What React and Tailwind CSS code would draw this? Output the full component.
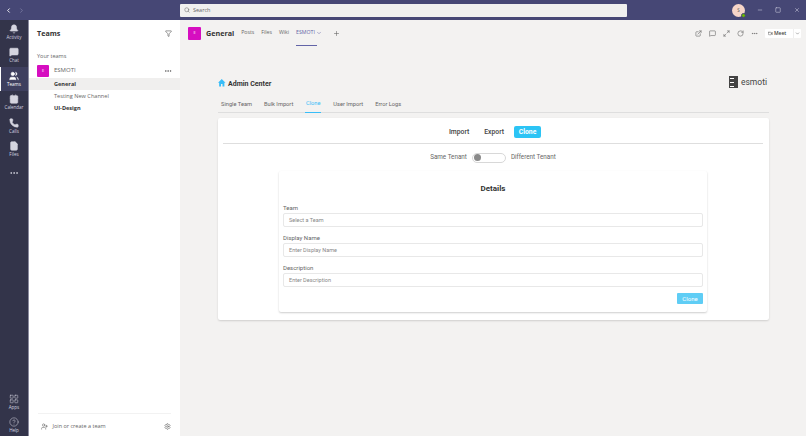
import { Bell, MessageSquareText, Users, CalendarDays, Phone, File, MoreHorizontal, LayoutGrid, HelpCircle, ChevronLeft, ChevronRight, Search, Minus, Square, X, Filter, UserPlus, Settings, ChevronDown, Plus, ExternalLink, MessageSquare, Maximize2, RotateCw, Video } from 'lucide-react'

const RAIL_TOP = [
  { label: 'Activity', icon: Bell },
  { label: 'Chat', icon: MessageSquareText },
  { label: 'Teams', icon: Users, active: true },
  { label: 'Calendar', icon: CalendarDays },
  { label: 'Calls', icon: Phone },
  { label: 'Files', icon: File },
]

const RAIL_BOTTOM = [
  { label: 'Apps', icon: LayoutGrid },
  { label: 'Help', icon: HelpCircle },
]

const ADMIN_TABS = [
  { label: 'Single Team' },
  { label: 'Bulk Import' },
  { label: 'Clone', active: true },
  { label: 'User Import' },
  { label: 'Error Logs' },
]

const FIELDS = [
  { label: 'Team', placeholder: 'Select a Team' },
  { label: 'Display Name', placeholder: 'Enter Display Name' },
  { label: 'Description', placeholder: 'Enter Description' },
]

function RailItem({ item }) {
  const Icon = item.icon
  return (
    <div className={`relative flex h-[23.5px] flex-col items-center justify-center ${item.active ? 'bg-[#3e3f5e] text-white' : 'text-[#d5d5e0]'}`}>
      {item.active && <div className="absolute left-0 top-0 h-full w-[1px] bg-white" />}
      <Icon size={10} fill="currentColor" strokeWidth={1.5} />
      <span className="mt-[1px] text-[4.5px] leading-[5px]">{item.label}</span>
    </div>
  )
}

function Channel({ name, bold, active }) {
  return (
    <div className={`flex h-[12px] items-center pl-[25px] text-[5.6px] ${active ? 'bg-[#f0efee]' : ''} ${bold ? 'font-bold text-[#333]' : 'text-[#666]'}`}>
      {name}
    </div>
  )
}

function Field({ field }) {
  return (
    <div className="mb-[5.5px]">
      <div className="mb-[1.5px] h-[9px] text-[6px] leading-[9px] text-[#666]">{field.label}</div>
      <div className="flex h-[14px] items-center rounded-[2px] border border-[#e8e8e8] bg-white pl-[5px] text-[5.5px] text-[#888]">
        {field.placeholder}
      </div>
    </div>
  )
}

export default function App() {
  return (
    <div className="flex h-[436px] w-[806px] flex-col overflow-hidden bg-[#f3f2f1] font-['Open_Sans',sans-serif]">
      {/* Title bar */}
      <div className="flex h-[20px] shrink-0 items-center bg-[#464775] text-[#d8d8e8]">
        <div className="flex w-[180px] items-center gap-[6px] pl-[5px]">
          <ChevronLeft size={7} strokeWidth={3} className="text-white" />
          <ChevronRight size={7} strokeWidth={2} className="text-[#8f90b5]" />
        </div>
        <div className="flex h-[13px] w-[447px] items-center gap-[3px] rounded-[1px] bg-[#f0f0ef] pl-[4px] text-[5.5px] text-[#666]">
          <Search size={6} />
          Search
        </div>
        <div className="ml-auto flex items-center pr-[6px]">
          <div className="relative mr-[12px] flex h-[13px] w-[13px] items-center justify-center rounded-full bg-[#f6d5c8] text-[4.5px] text-[#555]">
            S
            <div className="absolute -bottom-[1px] -right-[1px] h-[5px] w-[5px] rounded-full border border-[#464775] bg-[#6bb700]" />
          </div>
          <Minus size={6} className="mr-[12px]" />
          <Square size={6} className="mr-[13px]" />
          <X size={6} />
        </div>
      </div>

      <div className="flex min-h-0 flex-1">
        {/* App rail */}
        <div className="flex w-[29px] shrink-0 flex-col border-r border-[#8a8a9e] bg-[#33344a]">
          {RAIL_TOP.map((item) => <RailItem key={item.label} item={item} />)}
          <div className="flex h-[24px] items-center justify-center text-[#d5d5e0]"><MoreHorizontal size={10} /></div>
          <div className="mt-auto">
            {RAIL_BOTTOM.map((item) => (
              <div key={item.label} className="flex h-[23.5px] flex-col items-center justify-end pb-[3px] text-[#d5d5e0]">
                <item.icon size={10} strokeWidth={1.25} />
                <span className="mt-[1px] text-[4.5px] leading-[5px]">{item.label}</span>
              </div>
            ))}
          </div>
        </div>

        {/* Teams list */}
        <div className="flex w-[151px] shrink-0 flex-col bg-white">
          <div className="flex h-[26px] items-center justify-between px-[8px]">
            <span className="text-[7.2px] font-bold text-[#333]">Teams</span>
            <Filter size={7} className="text-[#555]" />
          </div>
          <div className="mt-[6px] pl-[8px] text-[5.5px] leading-[9px] text-[#666]">Your teams</div>
          <div className="mt-[2px] flex h-[15px] items-center px-[8px]">
            <div className="flex h-[12px] w-[12px] items-center justify-center rounded-[1px] bg-[#d60ec0] text-[4px] text-white">E</div>
            <span className="ml-[5px] text-[6px] text-[#666]">ESMOTI</span>
            <MoreHorizontal size={8} className="ml-auto text-[#555]" />
          </div>
          <Channel name="General" bold active />
          <Channel name="Testing New Channel" />
          <Channel name="UI-Design" bold />
          <div className="mx-[9px] mt-auto flex h-[23px] items-center border-t border-[#f2f2f2] pt-[2px] text-[#666]">
            <UserPlus size={7} className="ml-[2.5px]" />
            <span className="ml-[5px] text-[5.5px]">Join or create a team</span>
            <Settings size={7} className="ml-auto" />
          </div>
        </div>

        {/* Main column */}
        <div className="flex min-w-0 flex-1 flex-col">
          <div className="flex h-[26px] shrink-0 items-center pl-[8px] pr-[5px]">
            <div className="flex h-[13px] w-[13px] items-center justify-center rounded-[1px] bg-[#d60ec0] text-[4px] text-white">E</div>
            <span className="ml-[5px] text-[7.2px] font-bold text-[#333]">General</span>
            <span className="ml-[7px] text-[5.2px] text-[#666]">Posts</span>
            <span className="ml-[7px] text-[5.2px] text-[#666]">Files</span>
            <span className="ml-[7px] text-[5.2px] text-[#666]">Wiki</span>
            <div className="relative ml-[7px] flex h-full items-center gap-[1px] text-[5.2px] text-[#6264a7]">
              ESMOTI <ChevronDown size={6} />
              <div className="absolute bottom-0 left-0 h-[1px] w-[21px] bg-[#6264a7]" />
            </div>
            <Plus size={7} className="ml-[11px] text-[#666]" />
            <div className="ml-auto flex items-center gap-[7px] text-[#666]">
              <ExternalLink size={7} />
              <MessageSquare size={7} />
              <Maximize2 size={7} />
              <RotateCw size={7} />
              <MoreHorizontal size={7} />
              <div className="flex h-[9px] w-[36px] items-center rounded-[1px] bg-white pl-[3px] text-[5px] font-semibold leading-[9px] text-[#444]">
                <Video size={5} className="mr-[1px]" />
                Meet
                <div className="ml-auto flex h-full w-[8px] items-center justify-center border-l border-[#eee]">
                  <ChevronDown size={5} />
                </div>
              </div>
            </div>
          </div>

          <div className="flex-1 pl-[38px] pr-[37px] pt-[25px] font-['Roboto',sans-serif]">
            <div className="flex h-[24px] items-start justify-between">
              <div className="flex items-center pt-[8px]">
                <svg viewBox="0 0 10 10" className="mb-[3px] h-[7.5px] w-[7.5px] fill-[#38bdf8]">
                  <path d="M5 0 L10 5 L8.5 5 L8.5 10 L6 10 L6 6.5 L4 6.5 L4 10 L1.5 10 L1.5 5 L0 5 Z" />
                </svg>
                <span className="ml-[2.5px] text-[7px] font-bold text-[#333]">Admin Center</span>
              </div>
              <div className="flex items-center gap-[3px] pr-[2px] pt-[5px]">
                <div className="flex h-[12px] w-[9px] flex-col justify-between bg-[#444] p-[1.5px]">
                  <div className="h-[1px] w-[4px] bg-white" />
                  <div className="h-[1px] w-[4px] bg-white" />
                  <div className="h-[1px] w-[4px] bg-white" />
                </div>
                <span className="text-[8.5px] leading-[12px] text-[#444]">esmoti</span>
              </div>
            </div>
            <div className="flex h-[18px] gap-[12px] border-b border-[#dedede] pl-[3px]">
              {ADMIN_TABS.map((tab) => (
                <div key={tab.label} className={`flex h-[18px] items-center justify-center whitespace-nowrap text-[5.7px] ${tab.active ? 'w-[16px] border-b border-[#38bdf8] text-[#38bdf8]' : 'text-[#666]'}`}>
                  {tab.label}
                </div>
              ))}
            </div>

            <div className="mt-[5px] h-[202px] rounded-[2px] bg-white pl-[5px] pr-[6px] pt-[8px] shadow-[0_1px_2px_rgba(0,0,0,0.15)]">
              <div className="flex h-[12px] items-center justify-center pl-[4px] text-[6.8px] font-medium text-[#444]">
                <span>Import</span>
                <span className="ml-[15px]">Export</span>
                <span className="ml-[10px] flex h-[12px] w-[27px] items-center justify-center rounded-[2px] bg-[#2cc4f5] font-bold text-white">Clone</span>
              </div>
              <div className="mt-[5px] border-t border-[#dedede]" />
              <div className="flex h-[27px] items-center justify-center text-[6.3px] text-[#666]">
                Same Tenant
                <div className="mx-[5px] flex h-[10px] w-[34px] items-center rounded-full border border-[#d8d8d8] bg-white pl-[1px]">
                  <div className="h-[7px] w-[7px] rounded-full bg-[#8a8a8a]" />
                </div>
                Different Tenant
              </div>
              <div className="mx-auto h-[141px] w-[428px] rounded-[2px] bg-white px-[4px] pt-[12px] shadow-[0_1px_2px_rgba(0,0,0,0.2)]">
                <div className="mb-[7.5px] h-[12px] text-center text-[8px] font-bold leading-[12px] text-[#333]">Details</div>
                {FIELDS.map((field) => <Field key={field.label} field={field} />)}
                <div className="mt-[2.5px] flex justify-end">
                  <div className="flex h-[11px] w-[26px] items-center justify-center rounded-[1px] bg-[#5fcdf5] text-[6px] text-white">Clone</div>
                </div>
              </div>
            </div>
          </div>
        </div>
      </div>
    </div>
  )
}
